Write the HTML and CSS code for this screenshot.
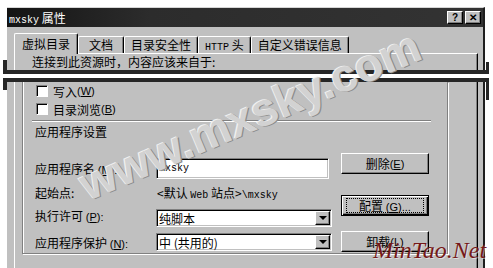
FILE: index.html
```html
<!DOCTYPE html>
<html lang="zh-CN">
<head>
    <meta charset="UTF-8">
    <title>mxsky 属性</title>
    <link rel="stylesheet" href="styles.css">
</head>
<body>
    <div class="sheet">
        <div class="piece piece-top">
            <div class="dialog dialog-top">
                <div class="titlebar">
                    <span class="title"><span class="en">mxsky</span> 属性</span>
                    <span class="caption-btns">
                        <span class="cbtn">?</span>
                        <span class="cbtn">&#x2715;</span>
                    </span>
                </div>
                <div class="tabs">
                    <span class="tab active">虚拟目录</span>
                    <span class="tab tab-min">文档</span>
                    <span class="tab">目录安全性</span>
                    <span class="tab"><span class="en">HTTP</span> 头</span>
                    <span class="tab">自定义错误信息</span>
                </div>
                <div class="panel panel-top">
                    <div class="source-line">连接到此资源时，内容应该来自于:</div>
                </div>
            </div>
        </div>

        <div class="piece piece-bottom">
            <div class="dialog dialog-bottom">
                <div class="panel panel-bottom">
                    <div class="frame">
                        <label class="check"><span class="box"></span>写入 <span class="acc">(<u>W</u>)</span></label>
                        <label class="check"><span class="box"></span>目录浏览 <span class="acc">(<u>B</u>)</span></label>
                        <div class="separator"></div>
                        <div class="group-title">应用程序设置</div>

                        <div class="app-settings">
                            <div class="fields">
                                <span class="field-label">应用程序名 <span class="acc">(<u>M</u>):</span></span>
                                <span class="textbox"><span class="en">mxsky</span></span>

                                <span class="field-label">起始点:</span>
                                <span class="path">&lt;默认 <span class="en">Web</span> 站点&gt;<span class="en">\mxsky</span></span>

                                <span class="field-label label-up">执行许可 <span class="acc">(<u>P</u>):</span></span>
                                <span class="select"><span class="select-text">纯脚本</span><span class="arrow"></span></span>

                                <span class="field-label">应用程序保护 <span class="acc">(<u>N</u>):</span></span>
                                <span class="select"><span class="select-text">中 (共用的)</span><span class="arrow"></span></span>
                            </div>
                            <div class="buttons">
                                <span class="button btn-remove">删除 <span class="acc">(<u>E</u>)</span></span>
                                <span class="button btn-default btn-config"><span class="focus">配置 <span class="acc">(<u>G</u>)...</span></span></span>
                                <span class="button btn-unload">卸载 <span class="acc">(<u>L</u>)</span></span>
                            </div>
                        </div>
                    </div>
                </div>
            </div>
        </div>

        <div class="watermark">www.mxsky.com</div>
        <div class="sitemark">MinTao.Net</div>
    </div>
</body>
</html>
```

FILE: styles.css
```css
body {
    margin: 0;
    background-color: #fff;
    font-family: "Noto Sans CJK SC", "Liberation Sans", sans-serif;
    font-size: 12px;
    color: #000;
}
.sheet {
    position: relative;
    width: 493px;
    height: 268px;
    overflow: hidden;
    background-color: #fff;
}
.en {
    font-family: "Liberation Mono", monospace;
    font-size: 10px;
}
.acc {
    font-family: "Liberation Sans", sans-serif;
    font-size: 11px;
}

/* the two cut pieces of the screenshot */
.piece {
    position: relative;
    box-sizing: border-box;
    width: 486px;
    margin-left: 3px;
    padding-left: 4px;
}
.piece-top {
    height: 74px;
    padding-top: 7px;
    border-bottom: 4px solid #262626;
}
.piece-top::before,
.piece-top::after,
.piece-bottom::before,
.piece-bottom::after {
    content: "";
    position: absolute;
    background-color: #262626;
}
.piece-top::before {
    left: 0;
    bottom: 0;
    width: 4px;
    height: 10px;
}
.piece-top::after {
    right: 0;
    bottom: 0;
    width: 3px;
    height: 8px;
}
.piece-bottom {
    height: 190px;
    margin-top: 4px;
    border-top: 4px solid #262626;
}
.piece-bottom::before {
    left: 0;
    top: 0;
    width: 4px;
    height: 8px;
}
.piece-bottom::after {
    right: 0;
    top: 0;
    width: 3px;
    height: 18px;
}

.dialog {
    box-sizing: border-box;
    width: 478px;
    background-color: #c0c0c0;
    border-right: 2px solid #1e1e1e;
}
.dialog-top {
    height: 63px;
    border-top: 1px solid #d6d6d6;
}
.dialog-bottom {
    height: 186px;
}

.titlebar {
    display: flex;
    align-items: center;
    height: 19px;
    padding-left: 2px;
    background: linear-gradient(to right, #141414, #2c2c2c 30%, #333);
    color: #fff;
}
.title {
    white-space: nowrap;
}
.caption-btns {
    display: flex;
    gap: 2px;
    margin-left: auto;
    margin-right: 2px;
}
.cbtn {
    box-sizing: border-box;
    width: 16px;
    height: 13px;
    background-color: #c0c0c0;
    border: 1px solid;
    border-color: #fff #000 #000 #fff;
    box-shadow: inset -1px -1px #808080;
    color: #000;
    font-family: "Liberation Sans", sans-serif;
    font-size: 10px;
    font-weight: bold;
    line-height: 11px;
    text-align: center;
}

.tabs {
    display: flex;
    align-items: flex-end;
    height: 26px;
    padding-left: 7px;
    box-sizing: border-box;
}
.tab {
    box-sizing: border-box;
    height: 17px;
    padding: 0 6px;
    border-top: 1px solid #fff;
    border-left: 1px solid #fff;
    border-right: 1px solid #000;
    border-radius: 2px 2px 0 0;
    box-shadow: inset -1px 0 #808080;
    line-height: 16px;
    white-space: nowrap;
}
.tab-min {
    min-width: 46px;
    text-align: center;
}
.tab.active {
    position: relative;
    z-index: 1;
    height: 21px;
    margin-bottom: -1px;
    padding: 0 7px;
    background-color: #c0c0c0;
    line-height: 19px;
}

.panel {
    box-sizing: border-box;
    width: 464px;
    margin-left: 7px;
    border-left: 1px solid #fff;
    border-right: 1px solid #000;
    box-shadow: inset -1px 0 #808080;
}
.panel-top {
    height: 17px;
    border-top: 1px solid #fff;
}
.source-line {
    padding-left: 17px;
    line-height: 16px;
}
.panel-bottom {
    height: 186px;
    padding-left: 7px;
}

.frame {
    box-sizing: border-box;
    width: 426px;
    height: 172px;
    padding-left: 9px;
    border: 1px solid #808080;
    border-top: none;
    box-shadow: inset 1px 0 #fff, 1px 1px #fff;
}
.check {
    display: flex;
    align-items: center;
    height: 18px;
    padding-left: 4px;
}
.box {
    box-sizing: border-box;
    width: 12px;
    height: 12px;
    margin-right: 5px;
    background-color: #fff;
    border: 1px solid;
    border-color: #808080 #fff #fff #808080;
    box-shadow: inset 1px 1px #000;
}
.separator {
    width: 399px;
    margin-top: 2px;
    border-top: 1px solid #808080;
    border-bottom: 1px solid #fff;
}
.group-title {
    height: 20px;
    padding-left: 3px;
    line-height: 20px;
}

.app-settings {
    display: flex;
    margin-top: 11px;
}
.fields {
    display: grid;
    grid-template-columns: 121px 176px;
    grid-template-rows: 21px 27px 24px 24px;
    align-items: center;
    padding-top: 5px;
    padding-left: 3px;
}
.label-up {
    margin-top: -5px;
}
.textbox,
.select {
    box-sizing: border-box;
    display: flex;
    align-items: center;
    background-color: #fff;
    border: 1px solid;
    border-color: #808080 #fff #fff #808080;
    box-shadow: inset 1px 1px #000, inset -1px -1px #c0c0c0;
    white-space: nowrap;
}
.textbox {
    width: 173px;
    height: 21px;
    padding-left: 2px;
}
.path {
    padding-left: 1px;
    white-space: nowrap;
}
.select {
    height: 18px;
    padding: 0 1px 0 2px;
}
.select-text {
    flex: 1;
}
.arrow {
    box-sizing: border-box;
    position: relative;
    width: 15px;
    height: 14px;
    background-color: #c0c0c0;
    border: 1px solid;
    border-color: #fff #000 #000 #fff;
    box-shadow: inset -1px -1px #808080;
}
.arrow::after {
    content: "";
    position: absolute;
    left: 3px;
    top: 4px;
    border-left: 4px solid transparent;
    border-right: 4px solid transparent;
    border-top: 4px solid #000;
}

.buttons {
    display: flex;
    flex-direction: column;
    margin-left: 9px;
}
.button {
    box-sizing: border-box;
    display: flex;
    align-items: center;
    justify-content: center;
    width: 88px;
    height: 21px;
    background-color: #c0c0c0;
    border: 1px solid;
    border-color: #fff #000 #000 #fff;
    box-shadow: inset -1px -1px #808080;
    white-space: nowrap;
}
.btn-config {
    margin-top: 21px;
    border: 1px solid #000;
    box-shadow: inset 1px 1px #fff, inset -1px -1px #000, inset -2px -2px #808080;
}
.focus {
    box-sizing: border-box;
    width: 78px;
    height: 15px;
    border: 1px dotted #000;
    line-height: 13px;
    text-align: center;
}
.btn-unload {
    margin-top: 15px;
}

/* watermarks over the picture */
.watermark {
    position: absolute;
    left: 250px;
    top: 115px;
    transform: translate(-50%, -50%) rotate(-23deg);
    font-family: "Liberation Sans", sans-serif;
    font-size: 46px;
    font-weight: bold;
    color: #d2d2d2;
    text-shadow: -1px -1px 0 #f0f0f0, 1px 1px 0 #8c8c8c;
    white-space: nowrap;
    pointer-events: none;
}
.sitemark {
    position: absolute;
    left: 373px;
    top: 238px;
    font-family: "Liberation Serif", serif;
    font-size: 24px;
    font-style: italic;
    line-height: 24px;
    color: #761818;
    text-shadow: 1px 1px 0 rgba(255, 255, 255, 0.5);
    white-space: nowrap;
}
```
